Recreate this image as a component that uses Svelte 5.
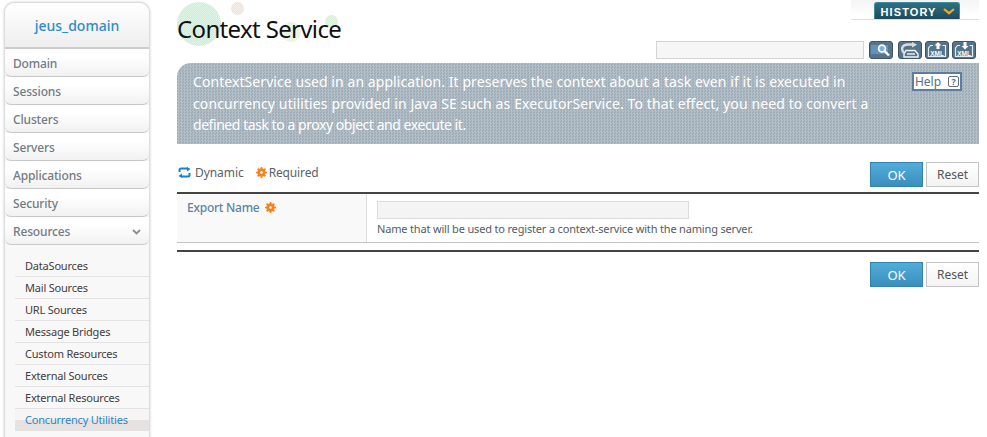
<script>
	const menu = ['Domain', 'Sessions', 'Clusters', 'Servers', 'Applications', 'Security'];
	const resources = [
		'DataSources',
		'Mail Sources',
		'URL Sources',
		'Message Bridges',
		'Custom Resources',
		'External Sources',
		'External Resources',
		'Concurrency Utilities'
	];
	const description = [
		'ContextService used in an application. It preserves the context about a task even if it is executed in',
		'concurrency utilities provided in Java SE such as ExecutorService. To that effect, you need to convert a',
		'defined task to a proxy object and execute it.'
	];
</script>

{#snippet gear()}
	<svg class="gear" width="11" height="11" viewBox="0 0 11 11">
		<circle cx="5.5" cy="5.5" r="3.1" fill="none" stroke="#f58220" stroke-width="2.2" />
		<path d="M5.5 0v11M0 5.5h11M1.6 1.6l7.8 7.8M9.4 1.6l-7.8 7.8" stroke="#f58220" stroke-width="1.6" />
		<circle cx="5.5" cy="5.5" r="1.3" fill="#fff" />
	</svg>
{/snippet}

{#snippet buttons()}
	<div class="buttons">
		<button class="ok">OK</button>
		<button class="reset">Reset</button>
	</div>
{/snippet}

{#snippet xmlFolder()}
	<path d="M6 3.500H3.500L1.500 6v8.500h17V3.500h-3" fill="none" stroke="#e6ebef" stroke-width="1.2" />
	<rect x="3" y="8" width="14" height="6" fill="#55748a" />
	<text x="10" y="13.600" class="xml">XML</text>
{/snippet}

<div class="page">
	<aside class="sidebar">
		<div class="domain">jeus_domain</div>
		{#each menu as item}
			<div class="menu-item">{item}</div>
		{/each}
		<div class="menu-item open">
			Resources
			<svg width="9" height="6" viewBox="0 0 9 6"><path d="M1 1l3.5 3.5L8 1" fill="none" stroke="#8a8f94" stroke-width="1.8" /></svg>
		</div>
		<ul class="submenu">
			{#each resources as res, i}
				<li class:active={i === resources.length - 1}>{res}</li>
			{/each}
		</ul>
	</aside>

	<main class="content">
		<header class="top">
			<div class="title-wrap">
				<span class="dot d1"></span>
				<span class="dot d2"></span>
				<span class="dot d3"></span>
				<span class="dot d4"></span>
				<h1>Context Service</h1>
			</div>
			<div class="top-right">
				<div class="history-bar">
					<div class="history">
						HISTORY
						<svg width="12" height="7" viewBox="0 0 12 7"><path d="M1 1l5 4.200L11 1" fill="none" stroke="#f5a623" stroke-width="2.2" /></svg>
					</div>
				</div>
				<div class="tools">
					<input class="search" type="text" />
					<button class="tool" aria-label="Search">
						<svg width="22" height="16" viewBox="0 0 22 16">
							<rect x="1" y="3" width="17" height="9" fill="#5f93bd" />
							<circle cx="12" cy="6.500" r="3.400" fill="#7fb0d6" stroke="#fff" stroke-width="1.700" />
							<path d="M14.500 9l4.500 4.500" stroke="#fff" stroke-width="2.400" />
						</svg>
					</button>
					<button class="tool" aria-label="Reload">
						<svg width="22" height="16" viewBox="0 0 22 16">
							<path d="M5 11C1 6 4 2.500 9 2.500h5" fill="none" stroke="#d5dde3" stroke-width="2.400" />
							<path d="M13 0l5 2.800L13 5.500z" fill="#d5dde3" />
							<path d="M7 8.500h9l3 3.500v3H5v-3z" fill="#55748a" stroke="#f1f4f6" stroke-width="1.400" />
							<path d="M8 12h8" stroke="#f1f4f6" stroke-width="1.400" />
						</svg>
					</button>
					<button class="tool" aria-label="Export XML">
						<svg width="20" height="16" viewBox="0 0 20 16">
							{@render xmlFolder()}
							<path d="M11 0l3.500 3.500H12.500V7h-3V3.500H7.500z" fill="#fff" />
						</svg>
					</button>
					<button class="tool" aria-label="Import XML">
						<svg width="20" height="16" viewBox="0 0 20 16">
							{@render xmlFolder()}
							<path d="M11 7.500L7.500 4H9.500V0h3v4H14.500z" fill="#fff" />
						</svg>
					</button>
				</div>
			</div>
		</header>

		<section class="banner">
			<p>
				{#each description as line}
					<span>{line}</span>
				{/each}
			</p>
			<button class="help">Help <span class="q">?</span></button>
		</section>

		<div class="legend-row">
			<div class="legend">
				<svg width="13" height="11" viewBox="0 0 13 11">
					<path d="M1.500 5V3a1.500 1.500 0 0 1 1.500-1.500h7M11.500 6v2A1.500 1.500 0 0 1 10 9.500H3" fill="none" stroke="#0a84e0" stroke-width="2" />
					<path d="M9 0l3.500 2L9 4.500zM4 6.500L.5 9 4 11z" fill="#0a84e0" />
				</svg>
				<span>Dynamic</span>
				<span class="req">{@render gear()}Required</span>
			</div>
			{@render buttons()}
		</div>

		<div class="form">
			<div class="label">Export Name {@render gear()}</div>
			<div class="field">
				<input type="text" />
				<div class="hint">Name that will be used to register a context-service with the naming server.</div>
			</div>
		</div>

		<div class="footer-row">
			{@render buttons()}
		</div>
	</main>
</div>

<style>
	:global(body) {
		margin: 0;
		background: #fff;
	}
	.page {
		display: flex;
		align-items: flex-start;
		width: 987px;
		height: 437px;
		overflow: hidden;
		font-family: "Noto Sans", "Open Sans", sans-serif;
		font-size: 12px;
	}
	.sidebar {
		width: 146px;
		height: 440px;
		margin: 2px 0 0 4px;
		flex: none;
		border: 1px solid #dcdcdc;
		border-bottom: 0;
		border-radius: 10px 10px 0 0;
		box-shadow: 0 0 3px rgba(0, 0, 0, 0.18);
		background: #f8f8f8;
		box-sizing: border-box;
	}
	.domain {
		height: 44px;
		line-height: 46px;
		text-align: center;
		color: #2b8bd1;
		font-size: 14px;
		font-weight: 500;
		border-bottom: 2px solid #ccc;
		border-radius: 10px 10px 0 0;
		background: linear-gradient(#fff, #eee);
	}
	.menu-item {
		height: 28px;
		box-sizing: border-box;
		padding: 2px 8px 0;
		color: #737b85;
		font-size: 12px;
		font-weight: 500;
		letter-spacing: -0.15px;
		background: linear-gradient(#fff 30%, #f1f1f1);
		border-bottom: 1px solid #c9c9c9;
		border-radius: 0 0 6px 6px;
		display: flex;
		justify-content: space-between;
		align-items: center;
	}
	.submenu {
		list-style: none;
		margin: 0;
		padding: 10px 0 0 10px;
	}
	.submenu li {
		height: 22px;
		box-sizing: border-box;
		padding-left: 10px;
		line-height: 21px;
		font-size: 11px;
		letter-spacing: -0.2px;
		color: #443c3c;
		border-bottom: 1px solid #e3e3e3;
	}
	.submenu li.active {
		color: #2a86cc;
		border-bottom: 0;
		background: linear-gradient(#f6f4f4 50%, #e6e2e2 50%);
	}
	.content {
		width: 802px;
		margin-left: 27px;
		flex: none;
	}
	.top {
		height: 63px;
		display: flex;
		justify-content: space-between;
	}
	.title-wrap {
		position: relative;
		height: 63px;
		flex: none;
		width: 200px;
	}
	h1 {
		position: relative;
		margin: 0;
		padding-top: 11px;
		font-size: 24px;
		line-height: 36px;
		font-weight: 400;
		letter-spacing: -0.65px;
		color: #111;
		white-space: nowrap;
	}
	.dot {
		position: absolute;
		border-radius: 50%;
		background-image: repeating-conic-gradient(rgba(255, 255, 255, 0.35) 0 25%, transparent 0 50%);
		background-size: 2px 2px;
	}
	.d1 { left: 0; top: 2px; width: 44px; height: 44px; background-color: #cdeed5; }
	.d2 { left: 54px; top: 2px; width: 13px; height: 13px; background-color: #efe4dc; }
	.d3 { left: 104px; top: 22px; width: 20px; height: 20px; background-color: #e6f2dc; }
	.d4 { left: 148px; top: 15px; width: 13px; height: 13px; background-color: #d9eedb; }
	.top-right {
		display: flex;
		flex-direction: column;
		align-items: flex-end;
	}
	.history-bar {
		width: 128px;
		height: 20px;
		padding-left: 3px;
		display: flex;
		justify-content: center;
		border-bottom: 1px solid #d2e2e6;
		background: linear-gradient(#f4f4f4, #fff 80%);
		box-sizing: border-box;
	}
	.history {
		width: 86px;
		height: 17px;
		margin-top: 2px;
		padding: 1px 0 0 2px;
		display: flex;
		align-items: center;
		justify-content: center;
		gap: 6px;
		box-sizing: border-box;
		border: 1px solid #3f8a9c;
		border-bottom: 0;
		border-radius: 3px 3px 0 0;
		background: linear-gradient(#2f7083, #1d4a5c);
		color: #fff;
		font-family: "Liberation Sans", sans-serif;
		font-size: 11px;
		font-weight: 700;
		letter-spacing: 1.1px;
	}
	.tools {
		display: flex;
		align-items: flex-start;
		gap: 3px;
		margin: 21px 3px 0 0;
	}
	.search {
		width: 208px;
		height: 18px;
		box-sizing: border-box;
		border: 1px solid #d4d4d4;
		background: #f6f6f6;
		margin-right: 2px;
	}
	.tool {
		width: 24px;
		height: 18px;
		padding: 0;
		box-sizing: border-box;
		border: 1px solid #3e5566;
		border-radius: 3px;
		background: #55748a;
		display: flex;
		align-items: center;
		justify-content: center;
	}
	.search + .tool {
		margin-right: 2px;
	}
	.xml {
		font-family: "Liberation Sans", sans-serif;
		font-size: 6.5px;
		font-weight: 700;
		text-anchor: middle;
		fill: #fff;
	}
	.banner {
		position: relative;
		height: 81px;
		box-sizing: border-box;
		padding: 8px 16px 0 16px;
		border-radius: 14px 0 0 0;
		background-color: #a9b5bf;
		background-image: repeating-conic-gradient(#b4bec7 0 25%, #9fadb8 0 50%);
		background-size: 3px 3px;
	}
	.banner p {
		margin: 0;
		color: #fff;
		font-size: 14px;
		line-height: 21.5px;
		letter-spacing: 0.07px;
	}
	.banner span:not(.q) {
		display: block;
		white-space: nowrap;
	}
	.banner p span:nth-child(2) {
		letter-spacing: 0.11px;
	}
	.banner p span:nth-child(3) {
		letter-spacing: -0.45px;
	}
	.help {
		position: absolute;
		top: 9px;
		right: 17px;
		width: 50px;
		height: 19px;
		padding: 0 0 1px;
		box-sizing: border-box;
		display: flex;
		align-items: center;
		justify-content: center;
		gap: 7px;
		border: 2px solid #5f7d9b;
		background: #fff;
		color: #5b6f85;
		font: 12px "Noto Sans", sans-serif;
	}
	.q {
		display: inline-block;
		width: 11px;
		height: 11px;
		box-sizing: border-box;
		line-height: 9px;
		font-size: 9px;
		font-weight: 700;
		border: 1px solid #5b6f85;
		border-radius: 2px;
	}
	.legend-row {
		display: flex;
		justify-content: space-between;
		align-items: flex-start;
		height: 48px;
		padding-top: 18px;
		box-sizing: border-box;
	}
	.legend {
		display: flex;
		align-items: center;
		gap: 4px;
		height: 20px;
		padding-left: 1px;
		color: #5a5f68;
		font-size: 12px;
		letter-spacing: -0.06px;
	}
	.req {
		display: inline-flex;
		align-items: center;
		gap: 2px;
		margin-left: 8px;
		letter-spacing: -0.15px;
	}
	.buttons {
		display: flex;
		gap: 3px;
	}
	.buttons button {
		height: 25px;
		padding: 0;
		box-sizing: border-box;
		font-family: inherit;
	}
	.ok {
		width: 53px;
		border: 1px solid #2f83ad;
		background: linear-gradient(#52acd9, #3b8fbd);
		color: #fff;
		font-size: 13px;
	}
	.reset {
		width: 53px;
		border: 1px solid #c4c4c4;
		background: linear-gradient(#fff, #f3f3f3);
		color: #555;
		font-size: 12px;
	}
	.form {
		display: flex;
		height: 51px;
		box-sizing: border-box;
		border-top: 2px solid #444;
		border-bottom: 1px solid #c4c4c4;
	}
	.label {
		width: 190px;
		box-sizing: border-box;
		padding: 5px 0 0 10px;
		background: #f9f9f9;
		border-right: 1px solid #ddd;
		color: #5f83a3;
		font-size: 12px;
		font-weight: 500;
		letter-spacing: -0.25px;
		display: flex;
		align-items: flex-start;
		gap: 6px;
	}
	.gear {
		flex: none;
		margin-top: 3px;
	}
	.req .gear {
		margin-top: 0;
	}
	.field {
		flex: 1;
		padding: 7px 0 0 10px;
	}
	.field input {
		display: block;
		width: 312px;
		height: 18px;
		box-sizing: border-box;
		border: 1px solid #dcdcdc;
		background: #f4f4f4;
	}
	.hint {
		margin-top: 2px;
		font-size: 11px;
		letter-spacing: -0.17px;
		color: #555b66;
	}
	.footer-row {
		margin-top: 7px;
		padding-top: 10px;
		border-top: 2px solid #444;
		display: flex;
		justify-content: flex-end;
	}
</style>
